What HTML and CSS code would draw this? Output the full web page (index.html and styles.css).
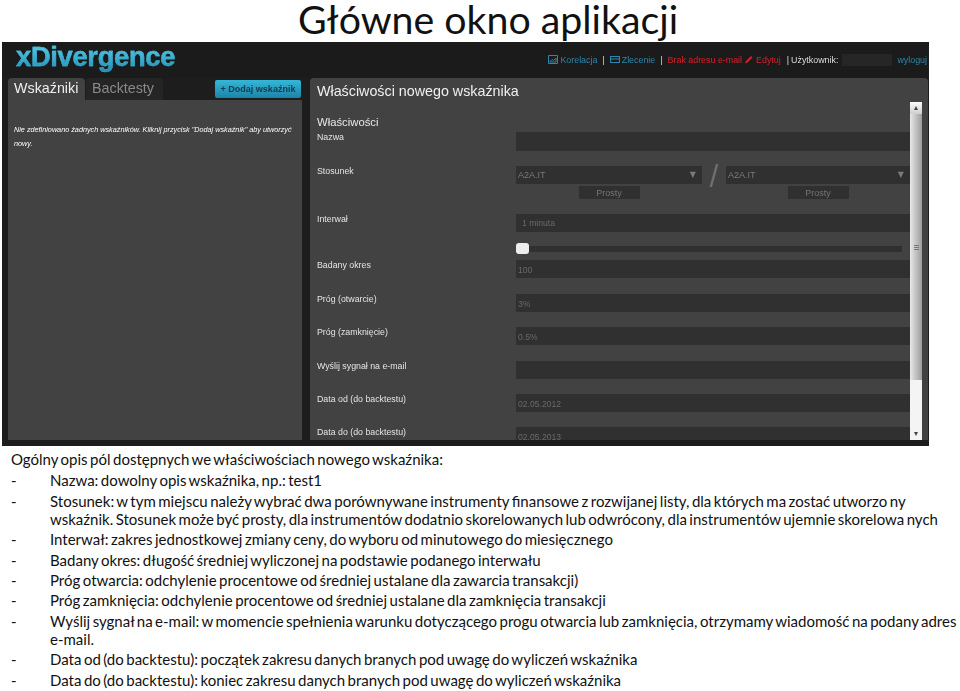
FILE: index.html
```html
<!DOCTYPE html>
<html>

<head>
    <meta charset="UTF-8">
    <title>Główne okno aplikacji</title>
    <link rel="stylesheet" href="styles.css">
</head>

<body>
    <h1 class="slide-title">Główne okno aplikacji</h1>

    <div class="app">
        <div class="top-bar">
            <div class="logo">xDivergence</div>
            <div class="top-menu">
                <svg class="menu-icon" viewBox="0 0 10 9"><path d="M.5.5h9v8h-9zM2 6.5l2-2 1.5 1L8 3v4H2z" fill="none" stroke="#2f86ad"/></svg>
                <a class="link">Korelacja</a>
                <span class="sep">|</span>
                <svg class="menu-icon" viewBox="0 0 10 9"><path d="M.5 1.5h9v6h-9zM.5 4h9" fill="none" stroke="#2f86ad" stroke-width="1.2"/></svg>
                <a class="link">Zlecenie</a>
                <span class="sep">|</span>
                <span class="warn">Brak adresu e-mail</span>
                <svg class="menu-icon pencil" viewBox="0 0 10 9"><path d="M1 8.5l1-2.5 5-5 1.5 1.5-5 5z" fill="#d8202a"/></svg>
                <span class="warn">Edytuj</span>
                <span class="sep user">|</span>
                <span class="user-label">Użytkownik:</span>
                <span class="user-box"></span>
                <a class="link">wyloguj</a>
            </div>
        </div>

        <div class="columns">
            <div class="left-col">
                <div class="tabs">
                    <div class="tab active">Wskaźniki</div>
                    <div class="tab">Backtesty</div>
                    <button class="add-button">+ Dodaj wskaźnik</button>
                </div>
                <div class="left-panel">
                    <p>Nie zdefiniowano żadnych wskaźników. Kliknij przycisk "Dodaj wskaźnik" aby utworzyć nowy.</p>
                </div>
            </div>

            <div class="right-panel">
                <h2>Właściwości nowego wskaźnika</h2>
                <div class="panel-body">
                    <div class="form">
                        <h3>Właściwości</h3>
                        <div class="row row-first">
                            <label>Nazwa</label>
                            <div class="field"></div>
                        </div>
                        <div class="row">
                            <label>Stosunek</label>
                            <div class="pair">
                                <div class="picker">
                                    <div class="select"><span>A2A.IT</span><span class="arrow">▼</span></div>
                                    <div class="simple">Prosty</div>
                                </div>
                                <div class="slash">/</div>
                                <div class="picker">
                                    <div class="select"><span>A2A.IT</span><span class="arrow">▼</span></div>
                                    <div class="simple">Prosty</div>
                                </div>
                            </div>
                        </div>
                        <div class="row row-interval">
                            <label>Interwał</label>
                            <div class="field interval">1 minuta</div>
                        </div>
                        <div class="row row-slider">
                            <span></span>
                            <div class="slider"><div class="thumb"></div></div>
                        </div>
                        <div class="row">
                            <label>Badany okres</label>
                            <div class="field">100</div>
                        </div>
                        <div class="row">
                            <label>Próg (otwarcie)</label>
                            <div class="field">3%</div>
                        </div>
                        <div class="row">
                            <label>Próg (zamknięcie)</label>
                            <div class="field">0.5%</div>
                        </div>
                        <div class="row">
                            <label>Wyślij sygnał na e-mail</label>
                            <div class="field"></div>
                        </div>
                        <div class="row">
                            <label>Data od (do backtestu)</label>
                            <div class="field">02.05.2012</div>
                        </div>
                        <div class="row">
                            <label>Data do (do backtestu)</label>
                            <div class="field">02.05.2013</div>
                        </div>
                    </div>
                    <div class="scrollbar">
                        <div class="scroll-btn">▴</div>
                        <div class="scroll-thumb"><span class="grip"></span></div>
                        <div class="scroll-rest">▾</div>
                    </div>
                </div>
            </div>
        </div>
    </div>

    <div class="notes">
        <p class="notes-head">Ogólny opis pól dostępnych we właściwościach nowego wskaźnika:</p>
        <ul>
            <li>Nazwa: dowolny opis wskaźnika, np.: test1</li>
            <li>Stosunek: w tym miejscu należy wybrać dwa porównywane instrumenty finansowe z rozwijanej listy, dla których ma zostać utworzo ny<br>wskaźnik. Stosunek może być prosty, dla instrumentów dodatnio skorelowanych lub odwrócony, dla instrumentów ujemnie skorelowa nych</li>
            <li>Interwał: zakres jednostkowej zmiany ceny, do wyboru od minutowego do miesięcznego</li>
            <li>Badany okres: długość średniej wyliczonej na podstawie podanego interwału</li>
            <li>Próg otwarcia: odchylenie procentowe od średniej ustalane dla zawarcia transakcji)</li>
            <li>Próg zamknięcia: odchylenie procentowe od średniej ustalane dla zamknięcia transakcji</li>
            <li>Wyślij sygnał na e-mail: w momencie spełnienia warunku dotyczącego progu otwarcia lub zamknięcia, otrzymamy wiadomość na podany adres<br>e-mail.</li>
            <li>Data od (do backtestu): początek zakresu danych branych pod uwagę do wyliczeń wskaźnika</li>
            <li>Data do (do backtestu): koniec zakresu danych branych pod uwagę do wyliczeń wskaźnika</li>
        </ul>
    </div>
</body>

</html>
```

FILE: styles.css
```css
html, body {
    height: 691px;
    overflow: hidden;
}

body {
    margin: 0;
    padding: 0;
    background-color: #fff;
    font-family: Lato, "Liberation Sans", sans-serif;
    color: #111;
}

.slide-title {
    margin: 0;
    height: 42px;
    padding-left: 298px;
    font-size: 39.3px;
    font-weight: 400;
    line-height: 38px;
    white-space: nowrap;
}

/* app screenshot, a bit soft like the scaled picture */
.app {
    margin-left: 2px;
    width: 927px;
    height: 404px;
    display: flex;
    flex-direction: column;
    overflow: hidden;
    background-color: #1d1d1d;
    font-family: "Liberation Sans", Arial, sans-serif;
    filter: blur(0.35px);
}

.top-bar {
    height: 36px;
    flex: none;
    display: flex;
    justify-content: space-between;
    align-items: center;
    background-color: #1b1b1b;
}

.logo {
    margin-left: 14px;
    margin-top: -6px;
    font-size: 27.3px;
    font-weight: 700;
    line-height: 30px;
    letter-spacing: -0.3px;
    background: linear-gradient(#5ed0ee, #1f8fb4);
    -webkit-background-clip: text;
    background-clip: text;
    color: transparent;
    -webkit-text-stroke: 0.4px #3bb0d4;
}

.top-menu {
    display: flex;
    align-items: center;
    margin-right: 2px;
    margin-top: -1px;
    font-size: 8.9px;
    white-space: nowrap;
}

.menu-icon {
    width: 10px;
    height: 9px;
    margin-right: 2px;
}

.pencil {
    margin: 0 2px;
}

.link {
    color: #2f86ad;
}

.sep {
    margin: 0 5px;
    color: #ddd;
}

.sep.user {
    margin: 0 2px 0 6px;
}

.warn {
    color: #d8202a;
}

.user-label {
    color: #ddd;
}

.user-box {
    width: 50px;
    height: 12px;
    margin: 0 5px 0 4px;
    background-color: #262626;
}

.columns {
    flex: 1;
    min-height: 0;
    display: flex;
    padding-bottom: 6px;
}

.left-col {
    width: 294px;
    margin-left: 6px;
    display: flex;
    flex-direction: column;
}

.tabs {
    height: 22px;
    flex: none;
    display: flex;
    align-items: flex-end;
    gap: 1px;
}

.tab {
    width: 77px;
    height: 22px;
    box-sizing: border-box;
    padding: 2px 0 0 6px;
    border-radius: 4px 4px 0 0;
    background-color: #252525;
    color: #8a8a8a;
    font-size: 14.3px;
}

.tab.active {
    background-color: #424242;
    color: #eee;
}

.add-button {
    width: 86px;
    height: 18px;
    margin: 0 1px 2px auto;
    padding: 0;
    border: none;
    border-radius: 2px;
    background: linear-gradient(#35b7d8, #1a84a8);
    color: #123c4c;
    font-family: "Liberation Sans", Arial, sans-serif;
    font-size: 9px;
    font-weight: 700;
}

.left-panel {
    flex: 1;
    padding: 23px 6px 0;
    background-color: #424242;
}

.left-panel p {
    margin: 0;
    color: #fff;
    font-size: 7.25px;
    font-style: italic;
    line-height: 14px;
}

.right-panel {
    width: 618px;
    margin-left: 8px;
    display: flex;
    flex-direction: column;
    border-radius: 4px 4px 0 0;
    background-color: #424242;
}

.right-panel h2 {
    margin: 0;
    height: 18px;
    flex: none;
    padding: 6px 0 0 7px;
    color: #f0f0f0;
    font-size: 14.3px;
    font-weight: 400;
    line-height: 15px;
}

.panel-body {
    flex: 1;
    min-height: 0;
    display: flex;
}

.form {
    width: 600px;
    padding: 14px 0 0 7px;
    box-sizing: border-box;
    overflow: hidden;
}

.form h3 {
    margin: 0;
    height: 16px;
    color: #e8e8e8;
    font-size: 11.3px;
    font-weight: 400;
    line-height: 13px;
}

.row {
    display: grid;
    grid-template-columns: 199px 1fr;
    margin-bottom: 15.4px;
}

.row-first {
    margin-bottom: 15px;
}

.row-interval {
    margin-bottom: 11px;
}

.row-slider {
    margin-bottom: 6px;
}

.row label {
    color: #e4e4e4;
    font-size: 8.8px;
    line-height: 11px;
    white-space: nowrap;
}

.field {
    height: 18px;
    padding-left: 2px;
    background-color: #303030;
    color: #696969;
    font-size: 8.6px;
    line-height: 20px;
}

.row-first .field {
    height: 19px;
}

.field.interval {
    padding-left: 6px;
    line-height: 18px;
}

.pair {
    display: grid;
    grid-template-columns: 186px 24px 184px;
}

.select {
    height: 18px;
    padding: 0 6px 0 2px;
    display: flex;
    justify-content: space-between;
    background-color: #303030;
    color: #7a7a7a;
    font-size: 9px;
    line-height: 18px;
}

.arrow {
    font-family: "DejaVu Sans", sans-serif;
    font-size: 8px;
}

.simple {
    width: 61px;
    height: 13px;
    margin: 2px auto 0;
    background-color: #303030;
    color: #757575;
    font-size: 9px;
    line-height: 14px;
    text-align: center;
}

.slash {
    color: #6e6e6e;
    font-size: 32px;
    font-weight: 400;
    line-height: 20px;
    text-align: center;
}

.slider {
    height: 11px;
    margin-right: 8px;
    display: flex;
    align-items: center;
    background: linear-gradient(#303030, #303030) center / 100% 6px no-repeat;
}

.thumb {
    width: 13px;
    height: 11px;
    border-radius: 3px;
    background-color: #eee;
}

.scrollbar {
    width: 12px;
    height: 338px;
    display: flex;
    flex-direction: column;
    background-color: #f1f1f1;
    color: #444;
    font-size: 8px;
    line-height: 12px;
    text-align: center;
}

.scroll-btn {
    height: 12px;
    background: linear-gradient(#fafafa, #cfcfcf);
}

.scroll-thumb {
    flex: 1;
    display: flex;
    justify-content: center;
    align-items: center;
    background: linear-gradient(90deg, #e8e8e8, #c2c2c2 50%, #9d9d9d);
}

.grip {
    width: 5px;
    height: 5px;
    background: repeating-linear-gradient(#777 0, #777 1px, transparent 1px, transparent 2px);
}

.scroll-rest {
    height: 60px;
    display: flex;
    justify-content: center;
    align-items: flex-end;
    background-color: #f4f4f4;
}

/* text under the screenshot */
.notes {
    padding: 4px 0 0 11px;
    font-size: 15px;
    line-height: 18.6px;
    word-spacing: -1.35px;
    white-space: nowrap;
}

.notes-head {
    margin: 0 0 2.7px;
}

.notes ul {
    margin: 0;
    padding: 0;
    list-style: none;
}

.notes li {
    position: relative;
    margin-bottom: 1.7px;
    padding-left: 39px;
}

.notes li::before {
    content: "-";
    position: absolute;
    left: 0;
}
```
